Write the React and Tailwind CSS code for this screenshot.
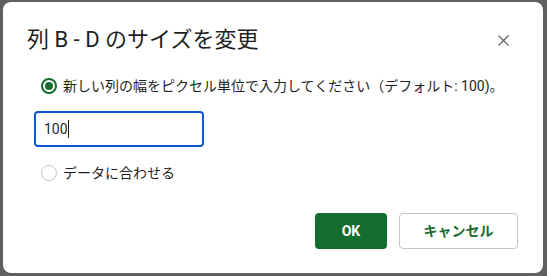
import { useState } from 'react';

const font = { fontFamily: 'Roboto, "Noto Sans CJK JP", sans-serif' };

function Radio({ checked, label, onClick }) {
  return (
    <div className="flex items-center h-5 cursor-pointer" onClick={onClick}>
      <div
        className={
          checked
            ? 'w-[16px] h-[16px] rounded-full border-2 border-[#146c2e] flex items-center justify-center'
            : 'w-[16px] h-[16px] rounded-full border border-[#c7c7c7]'
        }
      >
        {checked && <div className="w-[8px] h-[8px] rounded-full bg-[#146c2e]" />}
      </div>
      <span className="ml-[6px] text-[14px] leading-5 text-[#1f1f1f]">{label}</span>
    </div>
  );
}

export default function App() {
  const [mode, setMode] = useState('custom');

  return (
    <div className="w-[547px] h-[276px] bg-[#5f6061] pt-[2px] pl-[3px]" style={font}>
      <div className="w-[540px] h-[271px] bg-white rounded-[8px] flex flex-col pt-[24px]">
        {/* header */}
        <div className="flex items-center justify-between pl-[24px] pr-[28px]">
          <h1 className="text-[22px] leading-[28px] text-[#1f1f1f]">列 B - D のサイズを変更</h1>
          <button className="w-6 h-6 flex items-center justify-center text-[#5f6368]">
            <svg width="11" height="11" viewBox="0 0 11 11">
              <path d="M0.5 0.5 L10.5 10.5 M10.5 0.5 L0.5 10.5" stroke="currentColor" strokeWidth="1.3" />
            </svg>
          </button>
        </div>

        <div className="mt-[22px] pl-[38px]">
          <Radio
            checked={mode === 'custom'}
            onClick={() => setMode('custom')}
            label="新しい列の幅をピクセル単位で入力してください（デフォルト: 100)。"
          />
        </div>

        <div className="mt-[15px] ml-[31px] w-[170px] h-[36px] border-2 border-[#0b57d0] rounded-[4px] flex items-center pl-[8px] text-[14px] text-[#1f1f1f]">
          100
          <span className="inline-block w-px h-[18px] bg-[#1f1f1f]" />
        </div>

        <div className="mt-[16px] pl-[38px]">
          <Radio checked={mode === 'fit'} onClick={() => setMode('fit')} label="データに合わせる" />
        </div>

        {/* buttons */}
        <div className="mt-[30px] flex justify-end gap-[12px] pr-[25px]">
          <button className="w-[72px] h-[36px] rounded-[4px] bg-[#146c2e] text-white text-[14px] font-bold">
            OK
          </button>
          <button className="w-[119px] h-[36px] rounded-[4px] border border-[#c7c7c7] bg-white text-[#146c2e] text-[14px] font-bold">
            キャンセル
          </button>
        </div>
      </div>
    </div>
  );
}
